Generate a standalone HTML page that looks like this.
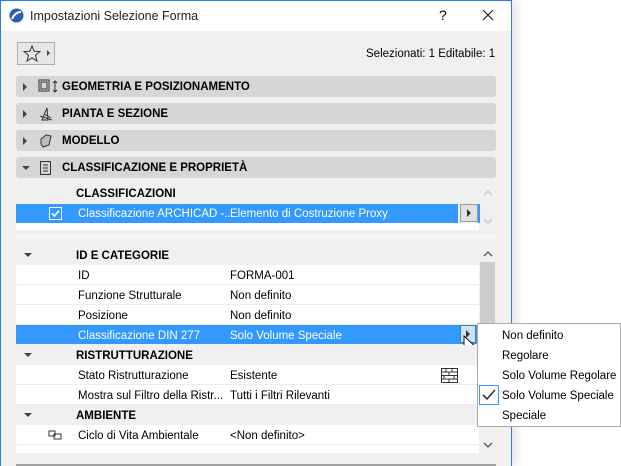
<!DOCTYPE html>
<html><head><meta charset="utf-8"><style>
*{margin:0;padding:0;box-sizing:border-box}
body{width:621px;height:466px;overflow:hidden;background:#fff;font-family:"Liberation Sans",sans-serif;font-size:11.5px;color:#000;position:relative}
.a{position:absolute}
.win{left:0;top:0;width:512px;height:466px;border:1px solid #2b7fd6;border-bottom:none;background:#f0f0f0;box-shadow:4px 0 10px rgba(0,0,0,.12)}
.title{left:1px;top:1px;width:510px;height:30px;background:#fff}
.bar{left:16px;width:480px;height:21px;background:#d6d6d6;border-radius:3px;font-weight:bold;font-size:11.5px;line-height:23px}
.bar .t{position:absolute;left:46px}
.tri{position:absolute;left:7px;top:7px;width:0;height:0;border-top:4px solid transparent;border-bottom:4px solid transparent;border-left:4px solid #444}
.trid{position:absolute;width:0;height:0;border-left:4px solid transparent;border-right:4px solid transparent;border-top:4px solid #444}
.row{left:16px;width:463px;height:20px;background:#fff;line-height:22px;border-bottom:1px solid #ececec}
.row .l{position:absolute;left:62px}
.row .v{position:absolute;left:214px}
.hd{left:16px;width:463px;height:20px;background:#f0f0f0;line-height:22px;font-weight:bold}
.hd .l{position:absolute;left:60px}
.sel{background:#3399ff;color:#fff;border-bottom-color:#3399ff}
.pm div{position:absolute;left:24px}
</style></head><body>
<div class="a win"></div>
<div class="a title"></div>
<svg class="a" style="left:9px;top:8px" width="15" height="15" viewBox="0 0 15 15"><circle cx="7.5" cy="7.5" r="7" fill="#2a5fb0"/><path d="M3 11 Q6 4 12 4" stroke="#fff" stroke-width="2" fill="none"/></svg>
<div class="a" style="left:30px;top:9px;font-size:12.5px;color:#222">Impostazioni Selezione Forma</div>
<div class="a" style="left:439px;top:7px;font-size:14px">?</div>
<svg class="a" style="left:482px;top:9px" width="12" height="12"><path d="M1 1L11 11M11 1L1 11" stroke="#222" stroke-width="1.2"/></svg>
<div class="a" style="left:17px;top:42px;width:38px;height:23px;border:1px solid #adadad;background:#e6e6e6"></div>
<svg class="a" style="left:23px;top:45px" width="18" height="17" viewBox="0 0 18 17"><path d="M9 1L11.2 6.3 17 6.6 12.5 10.3 14 16 9 12.8 4 16 5.5 10.3 1 6.6 6.8 6.3Z" fill="none" stroke="#333" stroke-width="1"/></svg>
<div class="a" style="left:47px;top:50px;border-top:3px solid transparent;border-bottom:3px solid transparent;border-left:3px solid #444"></div>
<div class="a" style="left:366px;top:48px;font-size:11.5px">Selezionati: 1 Editabile: 1</div>

<div class="a bar" style="top:76px"><div class="tri"></div><div class="t" style="left:46px">GEOMETRIA E POSIZIONAMENTO</div>
<svg style="position:absolute;left:21px;top:3px" width="24" height="16"><rect x="2" y="1" width="10" height="11" fill="none" stroke="#333"/><rect x="4" y="3" width="6" height="7" fill="none" stroke="#333"/><path d="M18 2V13M16 4L18 2 20 4M16 11L18 13 20 11" stroke="#333" fill="none"/></svg></div>
<div class="a bar" style="top:103px"><div class="tri"></div><div class="t">PIANTA E SEZIONE</div>
<svg style="position:absolute;left:22px;top:3px" width="18" height="16"><path d="M4 14L9 2 10 14ZM2 10L14 14M6 8L13 12" stroke="#333" fill="none"/></svg></div>
<div class="a bar" style="top:130px"><div class="tri"></div><div class="t">MODELLO</div>
<svg style="position:absolute;left:22px;top:3px" width="18" height="16"><path d="M3 6L8 2 13 3 11 12 5 14 3 11Z" fill="#bbb" stroke="#333"/></svg></div>
<div class="a bar" style="top:157px"><div class="trid" style="left:6px;top:9px"></div><div class="t">CLASSIFICAZIONE E PROPRIETÀ</div>
<svg style="position:absolute;left:23px;top:3px" width="14" height="16"><rect x="1.5" y="1.5" width="10" height="13" fill="none" stroke="#333"/><path d="M4 5H9M4 8H9M4 11H9" stroke="#333"/></svg></div>

<div class="a" style="left:16px;top:183px;width:463px;height:47px;background:#f0f0f0"></div>
<div class="a" style="left:76px;top:188px;font-weight:bold">CLASSIFICAZIONI</div>
<div class="a" style="left:16px;top:204px;width:442px;height:19px;background:#3399ff"></div>
<div class="a" style="left:49px;top:207px;width:13px;height:13px;border:1px solid #fff;background:#3399ff"></div>
<svg class="a" style="left:50px;top:208px" width="11" height="11"><path d="M2 5.5L4.5 8 9 2.5" stroke="#fff" stroke-width="1.6" fill="none"/></svg>
<div class="a" style="left:78px;top:208px;color:#fff">Classificazione ARCHICAD -...</div>
<div class="a" style="left:230px;top:208px;color:#fff">Elemento di Costruzione Proxy</div>
<div class="a" style="left:460px;top:204px;width:18px;height:18px;background:#e1e1e1;border:1px solid #999"></div>
<div class="a" style="left:467px;top:209px;border-top:4px solid transparent;border-bottom:4px solid transparent;border-left:4px solid #333"></div>
<div class="a" style="left:478px;top:204px;width:2px;height:19px;background:#3399ff"></div>
<div class="a" style="left:16px;top:223px;width:463px;height:7px;background:#fff"></div>
<svg class="a" style="left:483px;top:190px" width="10" height="6"><path d="M1 5L5 1 9 5" stroke="#c8c8c8" stroke-width="1.3" fill="none"/></svg>
<svg class="a" style="left:483px;top:218px" width="10" height="6"><path d="M1 1L5 5 9 1" stroke="#c8c8c8" stroke-width="1.3" fill="none"/></svg>
<div class="a" style="left:16px;top:234px;width:480px;height:5px;background:#f7f7f7"></div>

<div class="a" style="left:479px;top:245px;width:17px;height:207px;background:#f0f0f0"></div>
<div class="a" style="left:480px;top:262px;width:15px;height:62px;background:#cdcdcd"></div>
<svg class="a" style="left:483px;top:251px" width="10" height="6"><path d="M1 5L5 1 9 5" stroke="#555" stroke-width="1.3" fill="none"/></svg>
<svg class="a" style="left:483px;top:442px" width="10" height="6"><path d="M1 1L5 5 9 1" stroke="#555" stroke-width="1.3" fill="none"/></svg>

<div class="a hd" style="top:245px"><div class="trid" style="left:8px;top:8px"></div><div class="l">ID E CATEGORIE</div></div>
<div class="a row" style="top:265px"><div class="l">ID</div><div class="v">FORMA-001</div></div>
<div class="a row" style="top:285px"><div class="l">Funzione Strutturale</div><div class="v">Non definito</div></div>
<div class="a row" style="top:305px"><div class="l">Posizione</div><div class="v">Non definito</div></div>
<div class="a row sel" style="top:325px;height:19px"><div class="l">Classificazione DIN 277</div><div class="v">Solo Volume Speciale</div></div>
<div class="a" style="left:460px;top:325px;width:16px;height:18px;background:#cce4f7;border:1px solid #3c7fb1"></div>
<div class="a" style="left:466px;top:330px;border-top:4px solid transparent;border-bottom:4px solid transparent;border-left:4px solid #333"></div>
<svg class="a" style="left:463px;top:335px" width="14" height="20"><path d="M1 1V15L4.5 11.5 7 17 9 16 6.8 10.8 11.5 10.8Z" fill="#fff" stroke="#000" stroke-width=".9"/></svg>
<div class="a hd" style="top:345px"><div class="trid" style="left:8px;top:8px"></div><div class="l">RISTRUTTURAZIONE</div></div>
<div class="a row" style="top:365px"><div class="l">Stato Ristrutturazione</div><div class="v">Esistente</div></div>
<svg class="a" style="left:441px;top:368px" width="17" height="15"><rect x="0.5" y="0.5" width="16" height="14" fill="#fff" stroke="#333"/><path d="M0 4H17M0 7.5H17M0 11H17M5 0.5V4M11 0.5V4M8 4V7.5M3 7.5V11M13 7.5V11M8 11V15" stroke="#333"/></svg>
<div class="a row" style="top:385px"><div class="l">Mostra sul Filtro della Ristr...</div><div class="v">Tutti i Filtri Rilevanti</div></div>
<div class="a hd" style="top:405px"><div class="trid" style="left:8px;top:8px"></div><div class="l">AMBIENTE</div></div>
<div class="a row" style="top:425px"><div class="l">Ciclo di Vita Ambientale</div><div class="v">&lt;Non definito&gt;</div>
<svg style="position:absolute;left:32px;top:5px" width="14" height="10"><rect x="1" y="1" width="6" height="5" fill="none" stroke="#333"/><rect x="6" y="4" width="7" height="5" fill="none" stroke="#333"/></svg></div>
<div class="a" style="left:16px;top:445px;width:463px;height:8px;background:#fff;overflow:hidden"></div>
<div class="a" style="left:16px;top:464px;width:480px;height:2px;background:#a0a0a0"></div>

<div class="a pm" style="left:477px;top:323px;width:144px;height:104px;background:#fff;border:1px solid #aaa;font-size:11.5px">
<div style="top:6px">Non definito</div>
<div style="top:26px">Regolare</div>
<div style="top:46px">Solo Volume Regolare</div>
<div style="top:66px">Solo Volume Speciale</div>
<div style="top:86px">Speciale</div>
</div>
<div class="a" style="left:479px;top:385px;width:20px;height:20px;border:1px solid #3399ff"></div>
<svg class="a" style="left:482px;top:389px" width="14" height="12"><path d="M1 6L5 10 13 1" stroke="#333" stroke-width="1.6" fill="none"/></svg>
</body></html>
